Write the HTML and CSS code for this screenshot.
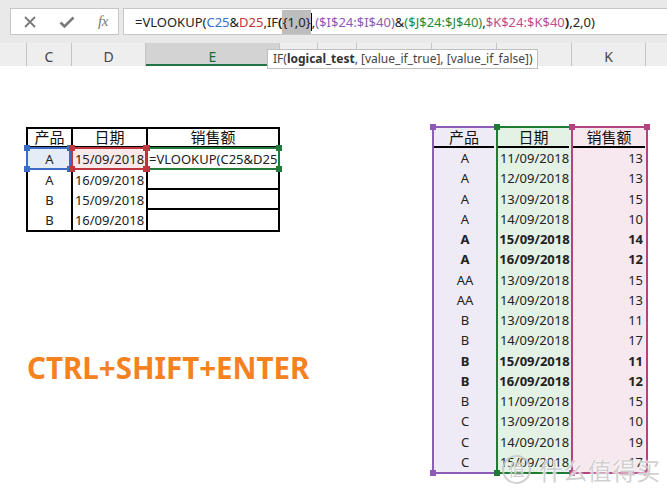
FILE: index.html
```html
<!DOCTYPE html>
<html>
<head>
<meta charset="utf-8">
<link rel="stylesheet" href="styles.css">
</head>
<body>
<div class="app">
  <div class="fbar">
    <div class="fbtns">
      <svg class="ico" width="14" height="14" viewBox="0 0 14 14"><path d="M2 2 L12 12 M12 2 L2 12" stroke="#7a7a7a" stroke-width="1.8" fill="none"/></svg>
      <svg class="ico" width="16" height="14" viewBox="0 0 16 14"><path d="M1.5 7.5 L5.5 11.5 L14.5 2.5" stroke="#7a7a7a" stroke-width="2.6" fill="none"/></svg>
      <span class="fx">fx</span>
    </div>
    <div class="finput">
      <span class="ftxt">=VLOOKUP(<span class="cb">C25</span>&amp;<span class="cr">D25</span>,IF<b>(</b><span class="hl">{1,0}</span><span class="caret"></span>,<span class="cp">($I$24:$I$40)</span>&amp;<span class="cg">($J$24:$J$40)</span>,<span class="cm">$K$24:$K$40</span><b>)</b>,2,0)</span>
    </div>
  </div>

  <div class="colhdr">
    <div class="ch corner"></div>
    <div class="ch c45">C</div>
    <div class="ch c74">D</div>
    <div class="ch c134 sel">E</div>
    <div class="ch c38"></div>
    <div class="ch c39"></div>
    <div class="ch c75"></div>
    <div class="ch c65"></div>
    <div class="ch c75"></div>
    <div class="ch c74">K</div>
    <div class="ch grow"></div>
  </div>
  <div class="tooltip">IF(<b>logical_test</b>, [value_if_true], [value_if_false])</div>

  <div class="sheet">
    <div class="left">
      <div class="ltable">
        <div class="lc h c1">产品</div>
        <div class="lc h c2">日期</div>
        <div class="lc h c3">销售额</div>

        <div class="lc c1 refc bluebg">A<span class="ref rblue"><i class="hd tl"></i><i class="hd tr"></i><i class="hd bl"></i><i class="hd br"></i></span></div>
        <div class="lc c2 refc redbg">15/09/2018<span class="ref rred"><i class="hd tl"></i><i class="hd tr"></i><i class="hd bl"></i><i class="hd br"></i></span></div>
        <div class="lc c3 refc formula">=VLOOKUP(C25&amp;D25,<span class="ref rgreen"><i class="hd tl"></i><i class="hd tr"></i><i class="hd bl"></i><i class="hd br"></i></span></div>

        <div class="lc c1">A</div>
        <div class="lc c2">16/09/2018</div>
        <div class="lc c3 line"></div>

        <div class="lc c1">B</div>
        <div class="lc c2">15/09/2018</div>
        <div class="lc c3 line"></div>

        <div class="lc c1">B</div>
        <div class="lc c2">16/09/2018</div>
        <div class="lc c3"></div>
      </div>
      <div class="shortcut">CTRL+SHIFT+ENTER</div>
    </div>

    <div class="right">
      <div class="rtable">
        <div class="rcol pcol">
          <div class="rh">产品</div>
          <div class="rd">A</div><div class="rd">A</div><div class="rd">A</div><div class="rd">A</div>
          <div class="rd bold">A</div><div class="rd bold">A</div>
          <div class="rd">AA</div><div class="rd">AA</div>
          <div class="rd">B</div><div class="rd">B</div>
          <div class="rd bold">B</div><div class="rd bold">B</div>
          <div class="rd">B</div>
          <div class="rd">C</div><div class="rd">C</div><div class="rd">C</div>
          <i class="hd tl"></i><i class="hd tr"></i><i class="hd bl"></i><i class="hd br"></i>
        </div>
        <div class="rcol gcol">
          <div class="rh">日期</div>
          <div class="rd">11/09/2018</div><div class="rd">12/09/2018</div><div class="rd">13/09/2018</div><div class="rd">14/09/2018</div>
          <div class="rd bold">15/09/2018</div><div class="rd bold">16/09/2018</div>
          <div class="rd">13/09/2018</div><div class="rd">14/09/2018</div>
          <div class="rd">13/09/2018</div><div class="rd">14/09/2018</div>
          <div class="rd bold">15/09/2018</div><div class="rd bold">16/09/2018</div>
          <div class="rd">11/09/2018</div>
          <div class="rd">13/09/2018</div><div class="rd">14/09/2018</div><div class="rd">15/09/2018</div>
          <i class="hd tl"></i><i class="hd tr"></i><i class="hd bl"></i><i class="hd br"></i>
        </div>
        <div class="rcol kcol">
          <div class="rh">销售额</div>
          <div class="rd num">13</div><div class="rd num">13</div><div class="rd num">15</div><div class="rd num">10</div>
          <div class="rd num bold">14</div><div class="rd num bold">12</div>
          <div class="rd num">15</div><div class="rd num">13</div>
          <div class="rd num">11</div><div class="rd num">17</div>
          <div class="rd num bold">11</div><div class="rd num bold">12</div>
          <div class="rd num">15</div>
          <div class="rd num">10</div><div class="rd num">19</div><div class="rd num">17</div>
          <i class="hd tl"></i><i class="hd tr"></i><i class="hd bl"></i><i class="hd br"></i>
        </div>
      </div>
    </div>

    <div class="watermark"><span class="wm-logo">值</span><span class="wm-text">什么值得买</span></div>
  </div>
</div>
</body>
</html>
```

FILE: styles.css
```css
* { box-sizing: border-box; }
html, body { margin: 0; padding: 0; }
body {
  width: 667px;
  height: 498px;
  overflow: hidden;
  background: #fff;
  font-family: "Noto Sans", "Noto Sans CJK SC", sans-serif;
  color: #222;
}
.app { position: relative; width: 667px; height: 498px; overflow: hidden; }

/* formula bar */
.fbar {
  height: 43px;
  background: #e9e9e9;
  display: flex;
  align-items: flex-start;
  padding-top: 8px;
  padding-left: 10px;
  gap: 4px;
}
.fbtns {
  width: 109px;
  height: 27px;
  background: #fff;
  border: 1px solid #c6c6c6;
  display: flex;
  align-items: center;
  padding-left: 12px;
}
.ico { display: block; }
.fbtns .ico:nth-child(2) { margin-left: 22px; }
.fx {
  margin-left: 23px;
  font-family: "Liberation Serif", serif;
  font-style: italic;
  font-size: 15px;
  color: #7a7a7a;
  letter-spacing: -0.5px;
}
.finput {
  flex: 1;
  height: 27px;
  background: #fff;
  border: 1px solid #c6c6c6;
  border-right: none;
  display: flex;
  align-items: center;
  padding-left: 11px;
}
.ftxt { font-size: 13px; color: #222; white-space: nowrap; }
.ftxt b { font-weight: bold; }
.cb { color: #3a6cc8; }
.cr { color: #c8323c; }
.cp { color: #8b5cb8; }
.cg { color: #1d8a3a; }
.cm { color: #c04e8c; }
.hl { background: #bdbdbd; padding: 3px 0; }
.caret {
  display: inline-block;
  width: 1px;
  height: 18px;
  background: #000;
  vertical-align: -4px;
}

/* column headers */
.colhdr {
  height: 23px;
  display: flex;
  background: #eeeeee;
}
.ch {
  height: 23px;
  border-right: 1px solid #c4c4c4;
  display: flex;
  align-items: center;
  justify-content: center;
  padding-top: 3px;
  font-size: 14px;
  color: #444;
  flex: none;
}
.corner { width: 27px; }
.c45 { width: 45px; }
.c74 { width: 74px; }
.c134 { width: 134px; }
.c38 { width: 38px; }
.c39 { width: 39px; }
.c75 { width: 75px; }
.c65 { width: 65px; }
.grow { flex: 1; border-right: none; }
.ch.sel {
  background: #d3d3d3;
  border-bottom: 2px solid #217346;
  color: #1d6b3e;
  padding-top: 5px;
}
.tooltip {
  position: absolute;
  left: 267px;
  top: 49px;
  width: 271px;
  height: 20px;
  background: #fff;
  border: 1px solid #bfbfbf;
  font-size: 12px;
  color: #444;
  padding-left: 5px;
  line-height: 18px;
  white-space: nowrap;
  z-index: 5;
}
.tooltip b { color: #333; }

/* sheet */
.sheet {
  position: relative;
  display: flex;
  height: 432px;
}
.left {
  width: 432px;
  flex: none;
  padding-left: 26px;
  padding-top: 61px;
}
.ltable {
  width: 254px;
  display: grid;
  grid-template-columns: 45px 75px 130px;
  grid-template-rows: 19px 21px 21px 20px 20px;
  border: 2px solid #000;
}
.lc {
  font-size: 13px;
  display: flex;
  align-items: center;
  justify-content: center;
  white-space: nowrap;
  position: relative;
}
.lc.c1, .lc.c2 { border-right: 2px solid #000; }
.lc.h {
  border-bottom: 2px solid #000;
  font-size: 15px;
  color: #111;
  line-height: 1;
}
.lc.line { border-bottom: 2px solid #000; }
.formula { justify-content: flex-start; padding-left: 1px; }
.bluebg { background: #e4ecf8; }
.redbg { background: #fbe8e8; }
.ref {
  position: absolute;
  top: -1px;
  bottom: -1px;
  border: 2px solid;
  pointer-events: none;
}
.rblue { left: -2px; right: 0; border-color: #3a6cc8; z-index: 2; }
.rred { left: -2px; right: -1px; border-color: #c0363e; z-index: 3; }
.rgreen { left: -2px; right: -2px; border-color: #217a3c; z-index: 1; }
.rblue .hd { background: #3a6cc8; }
.rred .hd { background: #c0363e; }
.rgreen .hd { background: #217a3c; }
.hd {
  position: absolute;
  width: 6px;
  height: 6px;
  display: block;
}
.hd.tl { left: -4px; top: -4px; }
.hd.tr { right: -4px; top: -4px; }
.hd.bl { left: -4px; bottom: -4px; }
.hd.br { right: -4px; bottom: -4px; }

.shortcut {
  margin-top: 118px;
  margin-left: 1px;
  font-size: 29.5px;
  font-weight: bold;
  color: #f5821f;
  line-height: 36px;
  white-space: nowrap;
}

/* right table */
.right {
  flex: 1;
  padding-top: 60px;
}
.rtable { display: flex; }
.rcol {
  position: relative;
  border-top: 2px solid;
  border-bottom: 2px solid;
  border-left: 2px solid;
  height: 348px;
}
.pcol { width: 64px; border-color: #8b5cb8; background: #efebf6; z-index: 1; }
.gcol { width: 75px; border-color: #1e7b32; background: #e4f2e6; z-index: 2; }
.kcol { width: 77px; border-color: #b0457f; background: #f7e8ef; border-right: 2px solid #b0457f; z-index: 3; }
.pcol .hd { background: #8b5cb8; }
.gcol .hd { background: #1e7b32; }
.kcol .hd { background: #b0457f; }
.pcol .hd.tr, .pcol .hd.br, .gcol .hd.tr, .gcol .hd.br { display: none; }
.rh {
  height: 20px;
  margin-right: 2px;
  border-bottom: 2px solid #000;
  font-size: 15px;
  line-height: 18px;
  text-align: center;
  color: #111;
}
.kcol .rh { margin-right: 1px; }
.rd {
  height: 20.25px;
  font-size: 13px;
  line-height: 20.25px;
  text-align: center;
  white-space: nowrap;
}
.rd.num { text-align: right; padding-right: 3px; }
.rd.bold { font-weight: bold; }

/* watermark */
.watermark {
  position: absolute;
  left: 502px;
  top: 386px;
  display: flex;
  align-items: center;
  z-index: 10;
  pointer-events: none;
}
.wm-logo {
  width: 29px;
  height: 29px;
  border: 2px solid rgba(200,200,200,0.85);
  border-radius: 50%;
  font-size: 17px;
  line-height: 25px;
  text-align: center;
  color: rgba(200,200,200,0.9);
  text-shadow: 0 0 2px #fff;
}
.wm-text {
  margin-left: 8px;
  font-size: 24px;
  color: rgba(200,200,200,0.85);
  text-shadow: 0 0 2px #fff, 0 0 2px #fff;
  letter-spacing: 0.3px;
}
```
